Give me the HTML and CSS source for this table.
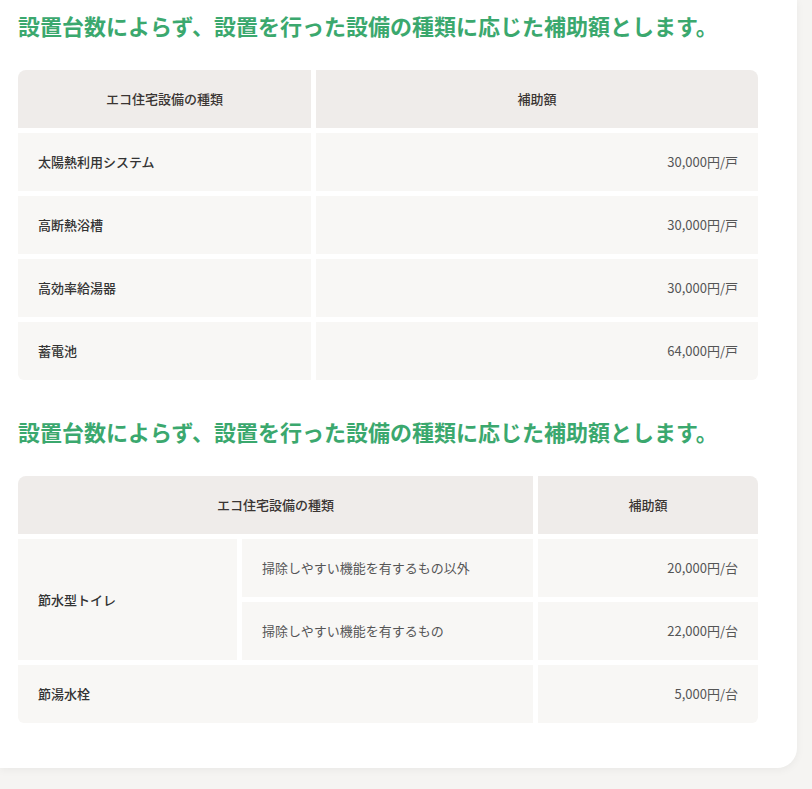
FILE: index.html
```html
<!DOCTYPE html>
<html lang="ja">
<head>
<meta charset="utf-8">
<title>補助額</title>
<link rel="stylesheet" href="styles.css">
</head>
<body>
<div class="card">
  <h2 class="heading">設置台数によらず、設置を行った設備の種類に応じた補助額とします。</h2>
  <div class="grid grid-a">
    <div class="cell head tl">エコ住宅設備の種類</div>
    <div class="cell head tr">補助額</div>
    <div class="cell name">太陽熱利用システム</div>
    <div class="cell amount">30,000円/戸</div>
    <div class="cell name">高断熱浴槽</div>
    <div class="cell amount">30,000円/戸</div>
    <div class="cell name">高効率給湯器</div>
    <div class="cell amount">30,000円/戸</div>
    <div class="cell name bl">蓄電池</div>
    <div class="cell amount br">64,000円/戸</div>
  </div>

  <h2 class="heading second">設置台数によらず、設置を行った設備の種類に応じた補助額とします。</h2>
  <div class="grid grid-b">
    <div class="cell head tl span2">エコ住宅設備の種類</div>
    <div class="cell head tr">補助額</div>
    <div class="cell name rows2">節水型トイレ</div>
    <div class="cell sub">掃除しやすい機能を有するもの以外</div>
    <div class="cell amount">20,000円/台</div>
    <div class="cell sub">掃除しやすい機能を有するもの</div>
    <div class="cell amount">22,000円/台</div>
    <div class="cell name bl span2">節湯水栓</div>
    <div class="cell amount br">5,000円/台</div>
  </div>
</div>
</body>
</html>
```
FILE: styles.css
```css
html, body {
  margin: 0;
  padding: 0;
}
body {
  background: #f5f4f2;
  font-family: "Noto Sans CJK JP", "Noto Sans", sans-serif;
  color: #333;
  height: 789px;
  overflow: hidden;
}
.card {
  width: 797px;
  box-sizing: border-box;
  background: #fff;
  border-radius: 0 0 20px 0;
  box-shadow: 0 2px 8px rgba(0, 0, 0, 0.05);
  padding: 9px 39px 45px 18px;
}
.heading {
  margin: 0 0 28px 0;
  font-size: 22px;
  line-height: 33px;
  font-weight: 700;
  color: #3ba86e;
  white-space: nowrap;
}
.heading.second {
  margin-top: 35px;
}
.grid {
  display: grid;
  gap: 5px;
  grid-auto-rows: 58px;
}
.grid-a {
  grid-template-columns: 293px 1fr;
}
.grid-b {
  grid-template-columns: 219px 291px 1fr;
}
.cell {
  background: #f8f7f5;
  display: flex;
  align-items: center;
  padding: 0 20px;
  font-size: 13px;
  line-height: 1.5;
}
.head {
  background: #efecea;
  justify-content: center;
  font-weight: 500;
  color: #3a3533;
}
.name {
  font-weight: 500;
  color: #333;
}
.sub {
  color: #555;
}
.amount {
  justify-content: flex-end;
  color: #555;
}
.span2 {
  grid-column: span 2;
}
.rows2 {
  grid-row: span 2;
}
.tl { border-top-left-radius: 8px; }
.tr { border-top-right-radius: 8px; }
.bl { border-bottom-left-radius: 6px; }
.br { border-bottom-right-radius: 6px; }
```
